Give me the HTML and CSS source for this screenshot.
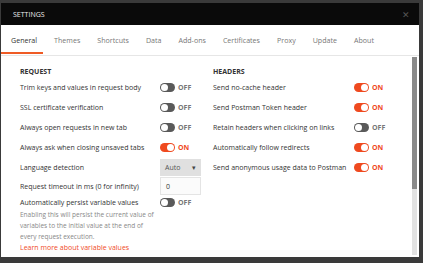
FILE: index.html
```html
<!DOCTYPE html>
<html lang="en">
<head>
    <meta charset="UTF-8">
    <title>Settings</title>
    <link rel="stylesheet" href="styles.css">
</head>
<body>

    <div class="modal">
        <div class="modal-header">
            <span class="modal-title">SETTINGS</span>
            <span class="modal-close">&#x2715;</span>
        </div>

        <div class="tabs">
            <a class="tab active">General</a>
            <a class="tab">Themes</a>
            <a class="tab">Shortcuts</a>
            <a class="tab">Data</a>
            <a class="tab">Add-ons</a>
            <a class="tab">Certificates</a>
            <a class="tab">Proxy</a>
            <a class="tab">Update</a>
            <a class="tab">About</a>
        </div>

        <div class="body">
            <div class="columns">
                <!-- Colonne requête -->
                <div class="col col-left">
                    <h3>REQUEST</h3>
                    <div class="row">
                        <span class="label">Trim keys and values in request body</span>
                        <span class="toggle off"></span><span class="state off">OFF</span>
                    </div>
                    <div class="row">
                        <span class="label">SSL certificate verification</span>
                        <span class="toggle off"></span><span class="state off">OFF</span>
                    </div>
                    <div class="row">
                        <span class="label">Always open requests in new tab</span>
                        <span class="toggle off"></span><span class="state off">OFF</span>
                    </div>
                    <div class="row">
                        <span class="label">Always ask when closing unsaved tabs</span>
                        <span class="toggle on"></span><span class="state on">ON</span>
                    </div>
                    <div class="row">
                        <span class="label">Language detection</span>
                        <span class="select">Auto <span class="caret">&#9662;</span></span>
                    </div>
                    <div class="row row-input">
                        <span class="label">Request timeout in ms (0 for infinity)</span>
                        <span class="input">0</span>
                    </div>
                    <div class="row row-small">
                        <span class="label">Automatically persist variable values</span>
                        <span class="toggle off"></span><span class="state off">OFF</span>
                    </div>
                    <p class="help">Enabling this will persist the current value of variables to the initial value at the end of every request execution.</p>
                    <a class="learn">Learn more about variable values</a>
                </div>

                <!-- Colonne en-têtes -->
                <div class="col col-right">
                    <h3>HEADERS</h3>
                    <div class="row">
                        <span class="label">Send no-cache header</span>
                        <span class="toggle on"></span><span class="state on">ON</span>
                    </div>
                    <div class="row">
                        <span class="label">Send Postman Token header</span>
                        <span class="toggle on"></span><span class="state on">ON</span>
                    </div>
                    <div class="row">
                        <span class="label">Retain headers when clicking on links</span>
                        <span class="toggle off"></span><span class="state off">OFF</span>
                    </div>
                    <div class="row">
                        <span class="label">Automatically follow redirects</span>
                        <span class="toggle on"></span><span class="state on">ON</span>
                    </div>
                    <div class="row">
                        <span class="label">Send anonymous usage data to Postman</span>
                        <span class="toggle on"></span><span class="state on">ON</span>
                    </div>
                </div>
            </div>

            <div class="scrollbar"><div class="thumb"></div></div>
        </div>
    </div>

</body>
</html>
```

FILE: styles.css
```css
body {
    margin: 0;
    padding: 0;
    background-color: #3a3a3a;
    font-family: 'Open Sans', sans-serif;
    font-size: 7px;
    color: #333;
}

.modal {
    margin: 3px 0 0 1px;
    width: 418px;
    height: 254px;
    background-color: #fff;
    display: flex;
    flex-direction: column;
}

.modal-header {
    height: 22px;
    background-color: #0a0a0a;
    display: flex;
    align-items: center;
    justify-content: space-between;
    padding: 0 9px 0 12px;
}

.modal-title {
    color: #eee;
    font-size: 7px;
}

.modal-close {
    color: #555;
    font-size: 9px;
}

/* Onglets */
.tabs {
    height: 30px;
    display: flex;
    align-items: center;
    border-bottom: 1px solid #e6e6e6;
    padding-left: 10px;
}

.tab {
    font-size: 7.1px;
    color: #777;
    margin-right: 17px;
    line-height: 30px;
}

.tab.active {
    color: #333;
    position: relative;
}

.tab.active::after {
    content: '';
    position: absolute;
    left: -10px;
    right: -6px;
    bottom: 1px;
    height: 2px;
    background-color: #ef5b25;
}

.body {
    flex: 1;
    display: flex;
    min-height: 0;
}

.columns {
    flex: 1;
    display: flex;
    padding: 10px 0 0 19px;
}

.col-left {
    width: 193px;
}

.col h3 {
    margin: 0;
    font-size: 7px;
    font-weight: 700;
    line-height: 11px;
}

.row {
    height: 20px;
    display: flex;
    align-items: center;
}

.row-input {
    height: 18px;
}

.row-small {
    height: 14px;
}

.label {
    width: 140px;
    white-space: nowrap;
}

.col-right .label {
    width: 141px;
}

.toggle {
    width: 15px;
    height: 9px;
    border-radius: 5px;
    position: relative;
    box-sizing: border-box;
}

.toggle::after {
    content: '';
    position: absolute;
    top: 1px;
    width: 7px;
    height: 7px;
    border-radius: 50%;
    background-color: #fff;
}

.toggle.off {
    background-color: #5a5a5a;
}

.toggle.off::after {
    left: 1px;
}

.toggle.on {
    background-color: #ef4a1f;
}

.toggle.on::after {
    right: 1px;
}

.state {
    margin-left: 3px;
    font-weight: 700;
    font-size: 7px;
}

.state.off {
    color: #777;
}

.state.on {
    color: #ef4a1f;
}

.select {
    width: 41px;
    height: 17px;
    box-sizing: border-box;
    background-color: #e0e0e0;
    padding: 0 5px;
    display: flex;
    align-items: center;
    justify-content: space-between;
    color: #555;
}

.caret {
    font-size: 7px;
    color: #444;
}

.input {
    width: 41px;
    height: 18px;
    box-sizing: border-box;
    border: 1px solid #e4e4e4;
    background-color: #fbfbfb;
    padding-left: 5px;
    display: flex;
    align-items: center;
}

.help {
    margin: 0;
    width: 140px;
    color: #888;
    font-size: 6.5px;
    line-height: 11px;
}

.learn {
    display: block;
    color: #ef4a1f;
    line-height: 11px;
}

/* Barre de défilement */
.scrollbar {
    width: 5px;
    margin: 1px 2px 2px 0;
    background-color: #e2e2e2;
}

.thumb {
    height: 132px;
    background-color: #8a8a8a;
}
```
